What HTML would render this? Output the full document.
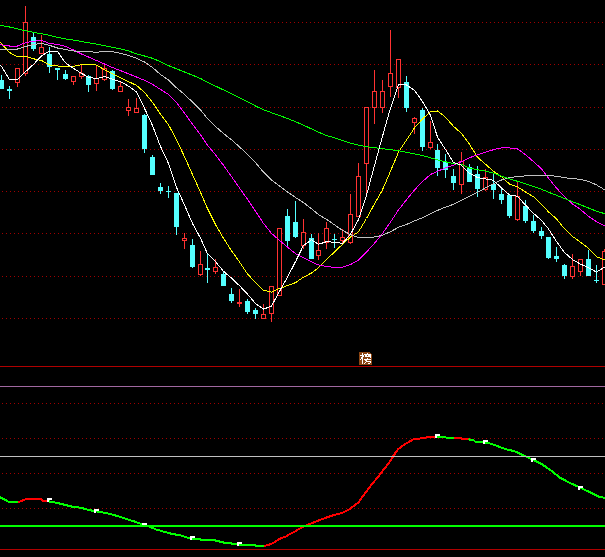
<!DOCTYPE html>
<html><head><meta charset="utf-8"><style>
html,body{margin:0;padding:0;background:#000;width:605px;height:557px;overflow:hidden;font-family:"Liberation Sans",sans-serif;}
svg{display:block}
</style></head><body><svg width="605" height="557" viewBox="0 0 605 557" shape-rendering="crispEdges"><path fill="#a00000" d="M2 22h1v1h-1zM6 22h1v1h-1zM10 22h1v1h-1zM14 22h1v1h-1zM18 22h1v1h-1zM22 22h1v1h-1zM26 22h1v1h-1zM30 22h1v1h-1zM34 22h1v1h-1zM38 22h1v1h-1zM42 22h1v1h-1zM46 22h1v1h-1zM50 22h1v1h-1zM54 22h1v1h-1zM58 22h1v1h-1zM62 22h1v1h-1zM66 22h1v1h-1zM70 22h1v1h-1zM74 22h1v1h-1zM78 22h1v1h-1zM82 22h1v1h-1zM86 22h1v1h-1zM90 22h1v1h-1zM94 22h1v1h-1zM98 22h1v1h-1zM102 22h1v1h-1zM106 22h1v1h-1zM110 22h1v1h-1zM114 22h1v1h-1zM118 22h1v1h-1zM122 22h1v1h-1zM126 22h1v1h-1zM130 22h1v1h-1zM134 22h1v1h-1zM138 22h1v1h-1zM142 22h1v1h-1zM146 22h1v1h-1zM150 22h1v1h-1zM154 22h1v1h-1zM158 22h1v1h-1zM162 22h1v1h-1zM166 22h1v1h-1zM170 22h1v1h-1zM174 22h1v1h-1zM178 22h1v1h-1zM182 22h1v1h-1zM186 22h1v1h-1zM190 22h1v1h-1zM194 22h1v1h-1zM198 22h1v1h-1zM202 22h1v1h-1zM206 22h1v1h-1zM210 22h1v1h-1zM214 22h1v1h-1zM218 22h1v1h-1zM222 22h1v1h-1zM226 22h1v1h-1zM230 22h1v1h-1zM234 22h1v1h-1zM238 22h1v1h-1zM242 22h1v1h-1zM246 22h1v1h-1zM250 22h1v1h-1zM254 22h1v1h-1zM258 22h1v1h-1zM262 22h1v1h-1zM266 22h1v1h-1zM270 22h1v1h-1zM274 22h1v1h-1zM278 22h1v1h-1zM282 22h1v1h-1zM286 22h1v1h-1zM290 22h1v1h-1zM294 22h1v1h-1zM298 22h1v1h-1zM302 22h1v1h-1zM306 22h1v1h-1zM310 22h1v1h-1zM314 22h1v1h-1zM318 22h1v1h-1zM322 22h1v1h-1zM326 22h1v1h-1zM330 22h1v1h-1zM334 22h1v1h-1zM338 22h1v1h-1zM342 22h1v1h-1zM346 22h1v1h-1zM350 22h1v1h-1zM354 22h1v1h-1zM358 22h1v1h-1zM362 22h1v1h-1zM366 22h1v1h-1zM370 22h1v1h-1zM374 22h1v1h-1zM378 22h1v1h-1zM382 22h1v1h-1zM386 22h1v1h-1zM390 22h1v1h-1zM394 22h1v1h-1zM398 22h1v1h-1zM402 22h1v1h-1zM406 22h1v1h-1zM410 22h1v1h-1zM414 22h1v1h-1zM418 22h1v1h-1zM422 22h1v1h-1zM426 22h1v1h-1zM430 22h1v1h-1zM434 22h1v1h-1zM438 22h1v1h-1zM442 22h1v1h-1zM446 22h1v1h-1zM450 22h1v1h-1zM454 22h1v1h-1zM458 22h1v1h-1zM462 22h1v1h-1zM466 22h1v1h-1zM470 22h1v1h-1zM474 22h1v1h-1zM478 22h1v1h-1zM482 22h1v1h-1zM486 22h1v1h-1zM490 22h1v1h-1zM494 22h1v1h-1zM498 22h1v1h-1zM502 22h1v1h-1zM506 22h1v1h-1zM510 22h1v1h-1zM514 22h1v1h-1zM518 22h1v1h-1zM522 22h1v1h-1zM526 22h1v1h-1zM530 22h1v1h-1zM534 22h1v1h-1zM538 22h1v1h-1zM542 22h1v1h-1zM546 22h1v1h-1zM550 22h1v1h-1zM554 22h1v1h-1zM558 22h1v1h-1zM562 22h1v1h-1zM566 22h1v1h-1zM570 22h1v1h-1zM574 22h1v1h-1zM578 22h1v1h-1zM582 22h1v1h-1zM586 22h1v1h-1zM590 22h1v1h-1zM594 22h1v1h-1zM598 22h1v1h-1zM602 22h1v1h-1zM2 64h1v1h-1zM6 64h1v1h-1zM10 64h1v1h-1zM14 64h1v1h-1zM18 64h1v1h-1zM22 64h1v1h-1zM26 64h1v1h-1zM30 64h1v1h-1zM34 64h1v1h-1zM38 64h1v1h-1zM42 64h1v1h-1zM46 64h1v1h-1zM50 64h1v1h-1zM54 64h1v1h-1zM58 64h1v1h-1zM62 64h1v1h-1zM66 64h1v1h-1zM70 64h1v1h-1zM74 64h1v1h-1zM78 64h1v1h-1zM82 64h1v1h-1zM86 64h1v1h-1zM90 64h1v1h-1zM94 64h1v1h-1zM98 64h1v1h-1zM102 64h1v1h-1zM106 64h1v1h-1zM110 64h1v1h-1zM114 64h1v1h-1zM118 64h1v1h-1zM122 64h1v1h-1zM126 64h1v1h-1zM130 64h1v1h-1zM134 64h1v1h-1zM138 64h1v1h-1zM142 64h1v1h-1zM146 64h1v1h-1zM150 64h1v1h-1zM154 64h1v1h-1zM158 64h1v1h-1zM162 64h1v1h-1zM166 64h1v1h-1zM170 64h1v1h-1zM174 64h1v1h-1zM178 64h1v1h-1zM182 64h1v1h-1zM186 64h1v1h-1zM190 64h1v1h-1zM194 64h1v1h-1zM198 64h1v1h-1zM202 64h1v1h-1zM206 64h1v1h-1zM210 64h1v1h-1zM214 64h1v1h-1zM218 64h1v1h-1zM222 64h1v1h-1zM226 64h1v1h-1zM230 64h1v1h-1zM234 64h1v1h-1zM238 64h1v1h-1zM242 64h1v1h-1zM246 64h1v1h-1zM250 64h1v1h-1zM254 64h1v1h-1zM258 64h1v1h-1zM262 64h1v1h-1zM266 64h1v1h-1zM270 64h1v1h-1zM274 64h1v1h-1zM278 64h1v1h-1zM282 64h1v1h-1zM286 64h1v1h-1zM290 64h1v1h-1zM294 64h1v1h-1zM298 64h1v1h-1zM302 64h1v1h-1zM306 64h1v1h-1zM310 64h1v1h-1zM314 64h1v1h-1zM318 64h1v1h-1zM322 64h1v1h-1zM326 64h1v1h-1zM330 64h1v1h-1zM334 64h1v1h-1zM338 64h1v1h-1zM342 64h1v1h-1zM346 64h1v1h-1zM350 64h1v1h-1zM354 64h1v1h-1zM358 64h1v1h-1zM362 64h1v1h-1zM366 64h1v1h-1zM370 64h1v1h-1zM374 64h1v1h-1zM378 64h1v1h-1zM382 64h1v1h-1zM386 64h1v1h-1zM390 64h1v1h-1zM394 64h1v1h-1zM398 64h1v1h-1zM402 64h1v1h-1zM406 64h1v1h-1zM410 64h1v1h-1zM414 64h1v1h-1zM418 64h1v1h-1zM422 64h1v1h-1zM426 64h1v1h-1zM430 64h1v1h-1zM434 64h1v1h-1zM438 64h1v1h-1zM442 64h1v1h-1zM446 64h1v1h-1zM450 64h1v1h-1zM454 64h1v1h-1zM458 64h1v1h-1zM462 64h1v1h-1zM466 64h1v1h-1zM470 64h1v1h-1zM474 64h1v1h-1zM478 64h1v1h-1zM482 64h1v1h-1zM486 64h1v1h-1zM490 64h1v1h-1zM494 64h1v1h-1zM498 64h1v1h-1zM502 64h1v1h-1zM506 64h1v1h-1zM510 64h1v1h-1zM514 64h1v1h-1zM518 64h1v1h-1zM522 64h1v1h-1zM526 64h1v1h-1zM530 64h1v1h-1zM534 64h1v1h-1zM538 64h1v1h-1zM542 64h1v1h-1zM546 64h1v1h-1zM550 64h1v1h-1zM554 64h1v1h-1zM558 64h1v1h-1zM562 64h1v1h-1zM566 64h1v1h-1zM570 64h1v1h-1zM574 64h1v1h-1zM578 64h1v1h-1zM582 64h1v1h-1zM586 64h1v1h-1zM590 64h1v1h-1zM594 64h1v1h-1zM598 64h1v1h-1zM602 64h1v1h-1zM2 107h1v1h-1zM6 107h1v1h-1zM10 107h1v1h-1zM14 107h1v1h-1zM18 107h1v1h-1zM22 107h1v1h-1zM26 107h1v1h-1zM30 107h1v1h-1zM34 107h1v1h-1zM38 107h1v1h-1zM42 107h1v1h-1zM46 107h1v1h-1zM50 107h1v1h-1zM54 107h1v1h-1zM58 107h1v1h-1zM62 107h1v1h-1zM66 107h1v1h-1zM70 107h1v1h-1zM74 107h1v1h-1zM78 107h1v1h-1zM82 107h1v1h-1zM86 107h1v1h-1zM90 107h1v1h-1zM94 107h1v1h-1zM98 107h1v1h-1zM102 107h1v1h-1zM106 107h1v1h-1zM110 107h1v1h-1zM114 107h1v1h-1zM118 107h1v1h-1zM122 107h1v1h-1zM126 107h1v1h-1zM130 107h1v1h-1zM134 107h1v1h-1zM138 107h1v1h-1zM142 107h1v1h-1zM146 107h1v1h-1zM150 107h1v1h-1zM154 107h1v1h-1zM158 107h1v1h-1zM162 107h1v1h-1zM166 107h1v1h-1zM170 107h1v1h-1zM174 107h1v1h-1zM178 107h1v1h-1zM182 107h1v1h-1zM186 107h1v1h-1zM190 107h1v1h-1zM194 107h1v1h-1zM198 107h1v1h-1zM202 107h1v1h-1zM206 107h1v1h-1zM210 107h1v1h-1zM214 107h1v1h-1zM218 107h1v1h-1zM222 107h1v1h-1zM226 107h1v1h-1zM230 107h1v1h-1zM234 107h1v1h-1zM238 107h1v1h-1zM242 107h1v1h-1zM246 107h1v1h-1zM250 107h1v1h-1zM254 107h1v1h-1zM258 107h1v1h-1zM262 107h1v1h-1zM266 107h1v1h-1zM270 107h1v1h-1zM274 107h1v1h-1zM278 107h1v1h-1zM282 107h1v1h-1zM286 107h1v1h-1zM290 107h1v1h-1zM294 107h1v1h-1zM298 107h1v1h-1zM302 107h1v1h-1zM306 107h1v1h-1zM310 107h1v1h-1zM314 107h1v1h-1zM318 107h1v1h-1zM322 107h1v1h-1zM326 107h1v1h-1zM330 107h1v1h-1zM334 107h1v1h-1zM338 107h1v1h-1zM342 107h1v1h-1zM346 107h1v1h-1zM350 107h1v1h-1zM354 107h1v1h-1zM358 107h1v1h-1zM362 107h1v1h-1zM366 107h1v1h-1zM370 107h1v1h-1zM374 107h1v1h-1zM378 107h1v1h-1zM382 107h1v1h-1zM386 107h1v1h-1zM390 107h1v1h-1zM394 107h1v1h-1zM398 107h1v1h-1zM402 107h1v1h-1zM406 107h1v1h-1zM410 107h1v1h-1zM414 107h1v1h-1zM418 107h1v1h-1zM422 107h1v1h-1zM426 107h1v1h-1zM430 107h1v1h-1zM434 107h1v1h-1zM438 107h1v1h-1zM442 107h1v1h-1zM446 107h1v1h-1zM450 107h1v1h-1zM454 107h1v1h-1zM458 107h1v1h-1zM462 107h1v1h-1zM466 107h1v1h-1zM470 107h1v1h-1zM474 107h1v1h-1zM478 107h1v1h-1zM482 107h1v1h-1zM486 107h1v1h-1zM490 107h1v1h-1zM494 107h1v1h-1zM498 107h1v1h-1zM502 107h1v1h-1zM506 107h1v1h-1zM510 107h1v1h-1zM514 107h1v1h-1zM518 107h1v1h-1zM522 107h1v1h-1zM526 107h1v1h-1zM530 107h1v1h-1zM534 107h1v1h-1zM538 107h1v1h-1zM542 107h1v1h-1zM546 107h1v1h-1zM550 107h1v1h-1zM554 107h1v1h-1zM558 107h1v1h-1zM562 107h1v1h-1zM566 107h1v1h-1zM570 107h1v1h-1zM574 107h1v1h-1zM578 107h1v1h-1zM582 107h1v1h-1zM586 107h1v1h-1zM590 107h1v1h-1zM594 107h1v1h-1zM598 107h1v1h-1zM602 107h1v1h-1zM2 149h1v1h-1zM6 149h1v1h-1zM10 149h1v1h-1zM14 149h1v1h-1zM18 149h1v1h-1zM22 149h1v1h-1zM26 149h1v1h-1zM30 149h1v1h-1zM34 149h1v1h-1zM38 149h1v1h-1zM42 149h1v1h-1zM46 149h1v1h-1zM50 149h1v1h-1zM54 149h1v1h-1zM58 149h1v1h-1zM62 149h1v1h-1zM66 149h1v1h-1zM70 149h1v1h-1zM74 149h1v1h-1zM78 149h1v1h-1zM82 149h1v1h-1zM86 149h1v1h-1zM90 149h1v1h-1zM94 149h1v1h-1zM98 149h1v1h-1zM102 149h1v1h-1zM106 149h1v1h-1zM110 149h1v1h-1zM114 149h1v1h-1zM118 149h1v1h-1zM122 149h1v1h-1zM126 149h1v1h-1zM130 149h1v1h-1zM134 149h1v1h-1zM138 149h1v1h-1zM142 149h1v1h-1zM146 149h1v1h-1zM150 149h1v1h-1zM154 149h1v1h-1zM158 149h1v1h-1zM162 149h1v1h-1zM166 149h1v1h-1zM170 149h1v1h-1zM174 149h1v1h-1zM178 149h1v1h-1zM182 149h1v1h-1zM186 149h1v1h-1zM190 149h1v1h-1zM194 149h1v1h-1zM198 149h1v1h-1zM202 149h1v1h-1zM206 149h1v1h-1zM210 149h1v1h-1zM214 149h1v1h-1zM218 149h1v1h-1zM222 149h1v1h-1zM226 149h1v1h-1zM230 149h1v1h-1zM234 149h1v1h-1zM238 149h1v1h-1zM242 149h1v1h-1zM246 149h1v1h-1zM250 149h1v1h-1zM254 149h1v1h-1zM258 149h1v1h-1zM262 149h1v1h-1zM266 149h1v1h-1zM270 149h1v1h-1zM274 149h1v1h-1zM278 149h1v1h-1zM282 149h1v1h-1zM286 149h1v1h-1zM290 149h1v1h-1zM294 149h1v1h-1zM298 149h1v1h-1zM302 149h1v1h-1zM306 149h1v1h-1zM310 149h1v1h-1zM314 149h1v1h-1zM318 149h1v1h-1zM322 149h1v1h-1zM326 149h1v1h-1zM330 149h1v1h-1zM334 149h1v1h-1zM338 149h1v1h-1zM342 149h1v1h-1zM346 149h1v1h-1zM350 149h1v1h-1zM354 149h1v1h-1zM358 149h1v1h-1zM362 149h1v1h-1zM366 149h1v1h-1zM370 149h1v1h-1zM374 149h1v1h-1zM378 149h1v1h-1zM382 149h1v1h-1zM386 149h1v1h-1zM390 149h1v1h-1zM394 149h1v1h-1zM398 149h1v1h-1zM402 149h1v1h-1zM406 149h1v1h-1zM410 149h1v1h-1zM414 149h1v1h-1zM418 149h1v1h-1zM422 149h1v1h-1zM426 149h1v1h-1zM430 149h1v1h-1zM434 149h1v1h-1zM438 149h1v1h-1zM442 149h1v1h-1zM446 149h1v1h-1zM450 149h1v1h-1zM454 149h1v1h-1zM458 149h1v1h-1zM462 149h1v1h-1zM466 149h1v1h-1zM470 149h1v1h-1zM474 149h1v1h-1zM478 149h1v1h-1zM482 149h1v1h-1zM486 149h1v1h-1zM490 149h1v1h-1zM494 149h1v1h-1zM498 149h1v1h-1zM502 149h1v1h-1zM506 149h1v1h-1zM510 149h1v1h-1zM514 149h1v1h-1zM518 149h1v1h-1zM522 149h1v1h-1zM526 149h1v1h-1zM530 149h1v1h-1zM534 149h1v1h-1zM538 149h1v1h-1zM542 149h1v1h-1zM546 149h1v1h-1zM550 149h1v1h-1zM554 149h1v1h-1zM558 149h1v1h-1zM562 149h1v1h-1zM566 149h1v1h-1zM570 149h1v1h-1zM574 149h1v1h-1zM578 149h1v1h-1zM582 149h1v1h-1zM586 149h1v1h-1zM590 149h1v1h-1zM594 149h1v1h-1zM598 149h1v1h-1zM602 149h1v1h-1zM2 191h1v1h-1zM6 191h1v1h-1zM10 191h1v1h-1zM14 191h1v1h-1zM18 191h1v1h-1zM22 191h1v1h-1zM26 191h1v1h-1zM30 191h1v1h-1zM34 191h1v1h-1zM38 191h1v1h-1zM42 191h1v1h-1zM46 191h1v1h-1zM50 191h1v1h-1zM54 191h1v1h-1zM58 191h1v1h-1zM62 191h1v1h-1zM66 191h1v1h-1zM70 191h1v1h-1zM74 191h1v1h-1zM78 191h1v1h-1zM82 191h1v1h-1zM86 191h1v1h-1zM90 191h1v1h-1zM94 191h1v1h-1zM98 191h1v1h-1zM102 191h1v1h-1zM106 191h1v1h-1zM110 191h1v1h-1zM114 191h1v1h-1zM118 191h1v1h-1zM122 191h1v1h-1zM126 191h1v1h-1zM130 191h1v1h-1zM134 191h1v1h-1zM138 191h1v1h-1zM142 191h1v1h-1zM146 191h1v1h-1zM150 191h1v1h-1zM154 191h1v1h-1zM158 191h1v1h-1zM162 191h1v1h-1zM166 191h1v1h-1zM170 191h1v1h-1zM174 191h1v1h-1zM178 191h1v1h-1zM182 191h1v1h-1zM186 191h1v1h-1zM190 191h1v1h-1zM194 191h1v1h-1zM198 191h1v1h-1zM202 191h1v1h-1zM206 191h1v1h-1zM210 191h1v1h-1zM214 191h1v1h-1zM218 191h1v1h-1zM222 191h1v1h-1zM226 191h1v1h-1zM230 191h1v1h-1zM234 191h1v1h-1zM238 191h1v1h-1zM242 191h1v1h-1zM246 191h1v1h-1zM250 191h1v1h-1zM254 191h1v1h-1zM258 191h1v1h-1zM262 191h1v1h-1zM266 191h1v1h-1zM270 191h1v1h-1zM274 191h1v1h-1zM278 191h1v1h-1zM282 191h1v1h-1zM286 191h1v1h-1zM290 191h1v1h-1zM294 191h1v1h-1zM298 191h1v1h-1zM302 191h1v1h-1zM306 191h1v1h-1zM310 191h1v1h-1zM314 191h1v1h-1zM318 191h1v1h-1zM322 191h1v1h-1zM326 191h1v1h-1zM330 191h1v1h-1zM334 191h1v1h-1zM338 191h1v1h-1zM342 191h1v1h-1zM346 191h1v1h-1zM350 191h1v1h-1zM354 191h1v1h-1zM358 191h1v1h-1zM362 191h1v1h-1zM366 191h1v1h-1zM370 191h1v1h-1zM374 191h1v1h-1zM378 191h1v1h-1zM382 191h1v1h-1zM386 191h1v1h-1zM390 191h1v1h-1zM394 191h1v1h-1zM398 191h1v1h-1zM402 191h1v1h-1zM406 191h1v1h-1zM410 191h1v1h-1zM414 191h1v1h-1zM418 191h1v1h-1zM422 191h1v1h-1zM426 191h1v1h-1zM430 191h1v1h-1zM434 191h1v1h-1zM438 191h1v1h-1zM442 191h1v1h-1zM446 191h1v1h-1zM450 191h1v1h-1zM454 191h1v1h-1zM458 191h1v1h-1zM462 191h1v1h-1zM466 191h1v1h-1zM470 191h1v1h-1zM474 191h1v1h-1zM478 191h1v1h-1zM482 191h1v1h-1zM486 191h1v1h-1zM490 191h1v1h-1zM494 191h1v1h-1zM498 191h1v1h-1zM502 191h1v1h-1zM506 191h1v1h-1zM510 191h1v1h-1zM514 191h1v1h-1zM518 191h1v1h-1zM522 191h1v1h-1zM526 191h1v1h-1zM530 191h1v1h-1zM534 191h1v1h-1zM538 191h1v1h-1zM542 191h1v1h-1zM546 191h1v1h-1zM550 191h1v1h-1zM554 191h1v1h-1zM558 191h1v1h-1zM562 191h1v1h-1zM566 191h1v1h-1zM570 191h1v1h-1zM574 191h1v1h-1zM578 191h1v1h-1zM582 191h1v1h-1zM586 191h1v1h-1zM590 191h1v1h-1zM594 191h1v1h-1zM598 191h1v1h-1zM602 191h1v1h-1zM2 233h1v1h-1zM6 233h1v1h-1zM10 233h1v1h-1zM14 233h1v1h-1zM18 233h1v1h-1zM22 233h1v1h-1zM26 233h1v1h-1zM30 233h1v1h-1zM34 233h1v1h-1zM38 233h1v1h-1zM42 233h1v1h-1zM46 233h1v1h-1zM50 233h1v1h-1zM54 233h1v1h-1zM58 233h1v1h-1zM62 233h1v1h-1zM66 233h1v1h-1zM70 233h1v1h-1zM74 233h1v1h-1zM78 233h1v1h-1zM82 233h1v1h-1zM86 233h1v1h-1zM90 233h1v1h-1zM94 233h1v1h-1zM98 233h1v1h-1zM102 233h1v1h-1zM106 233h1v1h-1zM110 233h1v1h-1zM114 233h1v1h-1zM118 233h1v1h-1zM122 233h1v1h-1zM126 233h1v1h-1zM130 233h1v1h-1zM134 233h1v1h-1zM138 233h1v1h-1zM142 233h1v1h-1zM146 233h1v1h-1zM150 233h1v1h-1zM154 233h1v1h-1zM158 233h1v1h-1zM162 233h1v1h-1zM166 233h1v1h-1zM170 233h1v1h-1zM174 233h1v1h-1zM178 233h1v1h-1zM182 233h1v1h-1zM186 233h1v1h-1zM190 233h1v1h-1zM194 233h1v1h-1zM198 233h1v1h-1zM202 233h1v1h-1zM206 233h1v1h-1zM210 233h1v1h-1zM214 233h1v1h-1zM218 233h1v1h-1zM222 233h1v1h-1zM226 233h1v1h-1zM230 233h1v1h-1zM234 233h1v1h-1zM238 233h1v1h-1zM242 233h1v1h-1zM246 233h1v1h-1zM250 233h1v1h-1zM254 233h1v1h-1zM258 233h1v1h-1zM262 233h1v1h-1zM266 233h1v1h-1zM270 233h1v1h-1zM274 233h1v1h-1zM278 233h1v1h-1zM282 233h1v1h-1zM286 233h1v1h-1zM290 233h1v1h-1zM294 233h1v1h-1zM298 233h1v1h-1zM302 233h1v1h-1zM306 233h1v1h-1zM310 233h1v1h-1zM314 233h1v1h-1zM318 233h1v1h-1zM322 233h1v1h-1zM326 233h1v1h-1zM330 233h1v1h-1zM334 233h1v1h-1zM338 233h1v1h-1zM342 233h1v1h-1zM346 233h1v1h-1zM350 233h1v1h-1zM354 233h1v1h-1zM358 233h1v1h-1zM362 233h1v1h-1zM366 233h1v1h-1zM370 233h1v1h-1zM374 233h1v1h-1zM378 233h1v1h-1zM382 233h1v1h-1zM386 233h1v1h-1zM390 233h1v1h-1zM394 233h1v1h-1zM398 233h1v1h-1zM402 233h1v1h-1zM406 233h1v1h-1zM410 233h1v1h-1zM414 233h1v1h-1zM418 233h1v1h-1zM422 233h1v1h-1zM426 233h1v1h-1zM430 233h1v1h-1zM434 233h1v1h-1zM438 233h1v1h-1zM442 233h1v1h-1zM446 233h1v1h-1zM450 233h1v1h-1zM454 233h1v1h-1zM458 233h1v1h-1zM462 233h1v1h-1zM466 233h1v1h-1zM470 233h1v1h-1zM474 233h1v1h-1zM478 233h1v1h-1zM482 233h1v1h-1zM486 233h1v1h-1zM490 233h1v1h-1zM494 233h1v1h-1zM498 233h1v1h-1zM502 233h1v1h-1zM506 233h1v1h-1zM510 233h1v1h-1zM514 233h1v1h-1zM518 233h1v1h-1zM522 233h1v1h-1zM526 233h1v1h-1zM530 233h1v1h-1zM534 233h1v1h-1zM538 233h1v1h-1zM542 233h1v1h-1zM546 233h1v1h-1zM550 233h1v1h-1zM554 233h1v1h-1zM558 233h1v1h-1zM562 233h1v1h-1zM566 233h1v1h-1zM570 233h1v1h-1zM574 233h1v1h-1zM578 233h1v1h-1zM582 233h1v1h-1zM586 233h1v1h-1zM590 233h1v1h-1zM594 233h1v1h-1zM598 233h1v1h-1zM602 233h1v1h-1zM2 276h1v1h-1zM6 276h1v1h-1zM10 276h1v1h-1zM14 276h1v1h-1zM18 276h1v1h-1zM22 276h1v1h-1zM26 276h1v1h-1zM30 276h1v1h-1zM34 276h1v1h-1zM38 276h1v1h-1zM42 276h1v1h-1zM46 276h1v1h-1zM50 276h1v1h-1zM54 276h1v1h-1zM58 276h1v1h-1zM62 276h1v1h-1zM66 276h1v1h-1zM70 276h1v1h-1zM74 276h1v1h-1zM78 276h1v1h-1zM82 276h1v1h-1zM86 276h1v1h-1zM90 276h1v1h-1zM94 276h1v1h-1zM98 276h1v1h-1zM102 276h1v1h-1zM106 276h1v1h-1zM110 276h1v1h-1zM114 276h1v1h-1zM118 276h1v1h-1zM122 276h1v1h-1zM126 276h1v1h-1zM130 276h1v1h-1zM134 276h1v1h-1zM138 276h1v1h-1zM142 276h1v1h-1zM146 276h1v1h-1zM150 276h1v1h-1zM154 276h1v1h-1zM158 276h1v1h-1zM162 276h1v1h-1zM166 276h1v1h-1zM170 276h1v1h-1zM174 276h1v1h-1zM178 276h1v1h-1zM182 276h1v1h-1zM186 276h1v1h-1zM190 276h1v1h-1zM194 276h1v1h-1zM198 276h1v1h-1zM202 276h1v1h-1zM206 276h1v1h-1zM210 276h1v1h-1zM214 276h1v1h-1zM218 276h1v1h-1zM222 276h1v1h-1zM226 276h1v1h-1zM230 276h1v1h-1zM234 276h1v1h-1zM238 276h1v1h-1zM242 276h1v1h-1zM246 276h1v1h-1zM250 276h1v1h-1zM254 276h1v1h-1zM258 276h1v1h-1zM262 276h1v1h-1zM266 276h1v1h-1zM270 276h1v1h-1zM274 276h1v1h-1zM278 276h1v1h-1zM282 276h1v1h-1zM286 276h1v1h-1zM290 276h1v1h-1zM294 276h1v1h-1zM298 276h1v1h-1zM302 276h1v1h-1zM306 276h1v1h-1zM310 276h1v1h-1zM314 276h1v1h-1zM318 276h1v1h-1zM322 276h1v1h-1zM326 276h1v1h-1zM330 276h1v1h-1zM334 276h1v1h-1zM338 276h1v1h-1zM342 276h1v1h-1zM346 276h1v1h-1zM350 276h1v1h-1zM354 276h1v1h-1zM358 276h1v1h-1zM362 276h1v1h-1zM366 276h1v1h-1zM370 276h1v1h-1zM374 276h1v1h-1zM378 276h1v1h-1zM382 276h1v1h-1zM386 276h1v1h-1zM390 276h1v1h-1zM394 276h1v1h-1zM398 276h1v1h-1zM402 276h1v1h-1zM406 276h1v1h-1zM410 276h1v1h-1zM414 276h1v1h-1zM418 276h1v1h-1zM422 276h1v1h-1zM426 276h1v1h-1zM430 276h1v1h-1zM434 276h1v1h-1zM438 276h1v1h-1zM442 276h1v1h-1zM446 276h1v1h-1zM450 276h1v1h-1zM454 276h1v1h-1zM458 276h1v1h-1zM462 276h1v1h-1zM466 276h1v1h-1zM470 276h1v1h-1zM474 276h1v1h-1zM478 276h1v1h-1zM482 276h1v1h-1zM486 276h1v1h-1zM490 276h1v1h-1zM494 276h1v1h-1zM498 276h1v1h-1zM502 276h1v1h-1zM506 276h1v1h-1zM510 276h1v1h-1zM514 276h1v1h-1zM518 276h1v1h-1zM522 276h1v1h-1zM526 276h1v1h-1zM530 276h1v1h-1zM534 276h1v1h-1zM538 276h1v1h-1zM542 276h1v1h-1zM546 276h1v1h-1zM550 276h1v1h-1zM554 276h1v1h-1zM558 276h1v1h-1zM562 276h1v1h-1zM566 276h1v1h-1zM570 276h1v1h-1zM574 276h1v1h-1zM578 276h1v1h-1zM582 276h1v1h-1zM586 276h1v1h-1zM590 276h1v1h-1zM594 276h1v1h-1zM598 276h1v1h-1zM602 276h1v1h-1zM2 318h1v1h-1zM6 318h1v1h-1zM10 318h1v1h-1zM14 318h1v1h-1zM18 318h1v1h-1zM22 318h1v1h-1zM26 318h1v1h-1zM30 318h1v1h-1zM34 318h1v1h-1zM38 318h1v1h-1zM42 318h1v1h-1zM46 318h1v1h-1zM50 318h1v1h-1zM54 318h1v1h-1zM58 318h1v1h-1zM62 318h1v1h-1zM66 318h1v1h-1zM70 318h1v1h-1zM74 318h1v1h-1zM78 318h1v1h-1zM82 318h1v1h-1zM86 318h1v1h-1zM90 318h1v1h-1zM94 318h1v1h-1zM98 318h1v1h-1zM102 318h1v1h-1zM106 318h1v1h-1zM110 318h1v1h-1zM114 318h1v1h-1zM118 318h1v1h-1zM122 318h1v1h-1zM126 318h1v1h-1zM130 318h1v1h-1zM134 318h1v1h-1zM138 318h1v1h-1zM142 318h1v1h-1zM146 318h1v1h-1zM150 318h1v1h-1zM154 318h1v1h-1zM158 318h1v1h-1zM162 318h1v1h-1zM166 318h1v1h-1zM170 318h1v1h-1zM174 318h1v1h-1zM178 318h1v1h-1zM182 318h1v1h-1zM186 318h1v1h-1zM190 318h1v1h-1zM194 318h1v1h-1zM198 318h1v1h-1zM202 318h1v1h-1zM206 318h1v1h-1zM210 318h1v1h-1zM214 318h1v1h-1zM218 318h1v1h-1zM222 318h1v1h-1zM226 318h1v1h-1zM230 318h1v1h-1zM234 318h1v1h-1zM238 318h1v1h-1zM242 318h1v1h-1zM246 318h1v1h-1zM250 318h1v1h-1zM254 318h1v1h-1zM258 318h1v1h-1zM262 318h1v1h-1zM266 318h1v1h-1zM270 318h1v1h-1zM274 318h1v1h-1zM278 318h1v1h-1zM282 318h1v1h-1zM286 318h1v1h-1zM290 318h1v1h-1zM294 318h1v1h-1zM298 318h1v1h-1zM302 318h1v1h-1zM306 318h1v1h-1zM310 318h1v1h-1zM314 318h1v1h-1zM318 318h1v1h-1zM322 318h1v1h-1zM326 318h1v1h-1zM330 318h1v1h-1zM334 318h1v1h-1zM338 318h1v1h-1zM342 318h1v1h-1zM346 318h1v1h-1zM350 318h1v1h-1zM354 318h1v1h-1zM358 318h1v1h-1zM362 318h1v1h-1zM366 318h1v1h-1zM370 318h1v1h-1zM374 318h1v1h-1zM378 318h1v1h-1zM382 318h1v1h-1zM386 318h1v1h-1zM390 318h1v1h-1zM394 318h1v1h-1zM398 318h1v1h-1zM402 318h1v1h-1zM406 318h1v1h-1zM410 318h1v1h-1zM414 318h1v1h-1zM418 318h1v1h-1zM422 318h1v1h-1zM426 318h1v1h-1zM430 318h1v1h-1zM434 318h1v1h-1zM438 318h1v1h-1zM442 318h1v1h-1zM446 318h1v1h-1zM450 318h1v1h-1zM454 318h1v1h-1zM458 318h1v1h-1zM462 318h1v1h-1zM466 318h1v1h-1zM470 318h1v1h-1zM474 318h1v1h-1zM478 318h1v1h-1zM482 318h1v1h-1zM486 318h1v1h-1zM490 318h1v1h-1zM494 318h1v1h-1zM498 318h1v1h-1zM502 318h1v1h-1zM506 318h1v1h-1zM510 318h1v1h-1zM514 318h1v1h-1zM518 318h1v1h-1zM522 318h1v1h-1zM526 318h1v1h-1zM530 318h1v1h-1zM534 318h1v1h-1zM538 318h1v1h-1zM542 318h1v1h-1zM546 318h1v1h-1zM550 318h1v1h-1zM554 318h1v1h-1zM558 318h1v1h-1zM562 318h1v1h-1zM566 318h1v1h-1zM570 318h1v1h-1zM574 318h1v1h-1zM578 318h1v1h-1zM582 318h1v1h-1zM586 318h1v1h-1zM590 318h1v1h-1zM594 318h1v1h-1zM598 318h1v1h-1zM602 318h1v1h-1zM2 403h1v1h-1zM6 403h1v1h-1zM10 403h1v1h-1zM14 403h1v1h-1zM18 403h1v1h-1zM22 403h1v1h-1zM26 403h1v1h-1zM30 403h1v1h-1zM34 403h1v1h-1zM38 403h1v1h-1zM42 403h1v1h-1zM46 403h1v1h-1zM50 403h1v1h-1zM54 403h1v1h-1zM58 403h1v1h-1zM62 403h1v1h-1zM66 403h1v1h-1zM70 403h1v1h-1zM74 403h1v1h-1zM78 403h1v1h-1zM82 403h1v1h-1zM86 403h1v1h-1zM90 403h1v1h-1zM94 403h1v1h-1zM98 403h1v1h-1zM102 403h1v1h-1zM106 403h1v1h-1zM110 403h1v1h-1zM114 403h1v1h-1zM118 403h1v1h-1zM122 403h1v1h-1zM126 403h1v1h-1zM130 403h1v1h-1zM134 403h1v1h-1zM138 403h1v1h-1zM142 403h1v1h-1zM146 403h1v1h-1zM150 403h1v1h-1zM154 403h1v1h-1zM158 403h1v1h-1zM162 403h1v1h-1zM166 403h1v1h-1zM170 403h1v1h-1zM174 403h1v1h-1zM178 403h1v1h-1zM182 403h1v1h-1zM186 403h1v1h-1zM190 403h1v1h-1zM194 403h1v1h-1zM198 403h1v1h-1zM202 403h1v1h-1zM206 403h1v1h-1zM210 403h1v1h-1zM214 403h1v1h-1zM218 403h1v1h-1zM222 403h1v1h-1zM226 403h1v1h-1zM230 403h1v1h-1zM234 403h1v1h-1zM238 403h1v1h-1zM242 403h1v1h-1zM246 403h1v1h-1zM250 403h1v1h-1zM254 403h1v1h-1zM258 403h1v1h-1zM262 403h1v1h-1zM266 403h1v1h-1zM270 403h1v1h-1zM274 403h1v1h-1zM278 403h1v1h-1zM282 403h1v1h-1zM286 403h1v1h-1zM290 403h1v1h-1zM294 403h1v1h-1zM298 403h1v1h-1zM302 403h1v1h-1zM306 403h1v1h-1zM310 403h1v1h-1zM314 403h1v1h-1zM318 403h1v1h-1zM322 403h1v1h-1zM326 403h1v1h-1zM330 403h1v1h-1zM334 403h1v1h-1zM338 403h1v1h-1zM342 403h1v1h-1zM346 403h1v1h-1zM350 403h1v1h-1zM354 403h1v1h-1zM358 403h1v1h-1zM362 403h1v1h-1zM366 403h1v1h-1zM370 403h1v1h-1zM374 403h1v1h-1zM378 403h1v1h-1zM382 403h1v1h-1zM386 403h1v1h-1zM390 403h1v1h-1zM394 403h1v1h-1zM398 403h1v1h-1zM402 403h1v1h-1zM406 403h1v1h-1zM410 403h1v1h-1zM414 403h1v1h-1zM418 403h1v1h-1zM422 403h1v1h-1zM426 403h1v1h-1zM430 403h1v1h-1zM434 403h1v1h-1zM438 403h1v1h-1zM442 403h1v1h-1zM446 403h1v1h-1zM450 403h1v1h-1zM454 403h1v1h-1zM458 403h1v1h-1zM462 403h1v1h-1zM466 403h1v1h-1zM470 403h1v1h-1zM474 403h1v1h-1zM478 403h1v1h-1zM482 403h1v1h-1zM486 403h1v1h-1zM490 403h1v1h-1zM494 403h1v1h-1zM498 403h1v1h-1zM502 403h1v1h-1zM506 403h1v1h-1zM510 403h1v1h-1zM514 403h1v1h-1zM518 403h1v1h-1zM522 403h1v1h-1zM526 403h1v1h-1zM530 403h1v1h-1zM534 403h1v1h-1zM538 403h1v1h-1zM542 403h1v1h-1zM546 403h1v1h-1zM550 403h1v1h-1zM554 403h1v1h-1zM558 403h1v1h-1zM562 403h1v1h-1zM566 403h1v1h-1zM570 403h1v1h-1zM574 403h1v1h-1zM578 403h1v1h-1zM582 403h1v1h-1zM586 403h1v1h-1zM590 403h1v1h-1zM594 403h1v1h-1zM598 403h1v1h-1zM602 403h1v1h-1zM2 438h1v1h-1zM6 438h1v1h-1zM10 438h1v1h-1zM14 438h1v1h-1zM18 438h1v1h-1zM22 438h1v1h-1zM26 438h1v1h-1zM30 438h1v1h-1zM34 438h1v1h-1zM38 438h1v1h-1zM42 438h1v1h-1zM46 438h1v1h-1zM50 438h1v1h-1zM54 438h1v1h-1zM58 438h1v1h-1zM62 438h1v1h-1zM66 438h1v1h-1zM70 438h1v1h-1zM74 438h1v1h-1zM78 438h1v1h-1zM82 438h1v1h-1zM86 438h1v1h-1zM90 438h1v1h-1zM94 438h1v1h-1zM98 438h1v1h-1zM102 438h1v1h-1zM106 438h1v1h-1zM110 438h1v1h-1zM114 438h1v1h-1zM118 438h1v1h-1zM122 438h1v1h-1zM126 438h1v1h-1zM130 438h1v1h-1zM134 438h1v1h-1zM138 438h1v1h-1zM142 438h1v1h-1zM146 438h1v1h-1zM150 438h1v1h-1zM154 438h1v1h-1zM158 438h1v1h-1zM162 438h1v1h-1zM166 438h1v1h-1zM170 438h1v1h-1zM174 438h1v1h-1zM178 438h1v1h-1zM182 438h1v1h-1zM186 438h1v1h-1zM190 438h1v1h-1zM194 438h1v1h-1zM198 438h1v1h-1zM202 438h1v1h-1zM206 438h1v1h-1zM210 438h1v1h-1zM214 438h1v1h-1zM218 438h1v1h-1zM222 438h1v1h-1zM226 438h1v1h-1zM230 438h1v1h-1zM234 438h1v1h-1zM238 438h1v1h-1zM242 438h1v1h-1zM246 438h1v1h-1zM250 438h1v1h-1zM254 438h1v1h-1zM258 438h1v1h-1zM262 438h1v1h-1zM266 438h1v1h-1zM270 438h1v1h-1zM274 438h1v1h-1zM278 438h1v1h-1zM282 438h1v1h-1zM286 438h1v1h-1zM290 438h1v1h-1zM294 438h1v1h-1zM298 438h1v1h-1zM302 438h1v1h-1zM306 438h1v1h-1zM310 438h1v1h-1zM314 438h1v1h-1zM318 438h1v1h-1zM322 438h1v1h-1zM326 438h1v1h-1zM330 438h1v1h-1zM334 438h1v1h-1zM338 438h1v1h-1zM342 438h1v1h-1zM346 438h1v1h-1zM350 438h1v1h-1zM354 438h1v1h-1zM358 438h1v1h-1zM362 438h1v1h-1zM366 438h1v1h-1zM370 438h1v1h-1zM374 438h1v1h-1zM378 438h1v1h-1zM382 438h1v1h-1zM386 438h1v1h-1zM390 438h1v1h-1zM394 438h1v1h-1zM398 438h1v1h-1zM402 438h1v1h-1zM406 438h1v1h-1zM410 438h1v1h-1zM414 438h1v1h-1zM418 438h1v1h-1zM422 438h1v1h-1zM426 438h1v1h-1zM430 438h1v1h-1zM434 438h1v1h-1zM438 438h1v1h-1zM442 438h1v1h-1zM446 438h1v1h-1zM450 438h1v1h-1zM454 438h1v1h-1zM458 438h1v1h-1zM462 438h1v1h-1zM466 438h1v1h-1zM470 438h1v1h-1zM474 438h1v1h-1zM478 438h1v1h-1zM482 438h1v1h-1zM486 438h1v1h-1zM490 438h1v1h-1zM494 438h1v1h-1zM498 438h1v1h-1zM502 438h1v1h-1zM506 438h1v1h-1zM510 438h1v1h-1zM514 438h1v1h-1zM518 438h1v1h-1zM522 438h1v1h-1zM526 438h1v1h-1zM530 438h1v1h-1zM534 438h1v1h-1zM538 438h1v1h-1zM542 438h1v1h-1zM546 438h1v1h-1zM550 438h1v1h-1zM554 438h1v1h-1zM558 438h1v1h-1zM562 438h1v1h-1zM566 438h1v1h-1zM570 438h1v1h-1zM574 438h1v1h-1zM578 438h1v1h-1zM582 438h1v1h-1zM586 438h1v1h-1zM590 438h1v1h-1zM594 438h1v1h-1zM598 438h1v1h-1zM602 438h1v1h-1zM2 473h1v1h-1zM6 473h1v1h-1zM10 473h1v1h-1zM14 473h1v1h-1zM18 473h1v1h-1zM22 473h1v1h-1zM26 473h1v1h-1zM30 473h1v1h-1zM34 473h1v1h-1zM38 473h1v1h-1zM42 473h1v1h-1zM46 473h1v1h-1zM50 473h1v1h-1zM54 473h1v1h-1zM58 473h1v1h-1zM62 473h1v1h-1zM66 473h1v1h-1zM70 473h1v1h-1zM74 473h1v1h-1zM78 473h1v1h-1zM82 473h1v1h-1zM86 473h1v1h-1zM90 473h1v1h-1zM94 473h1v1h-1zM98 473h1v1h-1zM102 473h1v1h-1zM106 473h1v1h-1zM110 473h1v1h-1zM114 473h1v1h-1zM118 473h1v1h-1zM122 473h1v1h-1zM126 473h1v1h-1zM130 473h1v1h-1zM134 473h1v1h-1zM138 473h1v1h-1zM142 473h1v1h-1zM146 473h1v1h-1zM150 473h1v1h-1zM154 473h1v1h-1zM158 473h1v1h-1zM162 473h1v1h-1zM166 473h1v1h-1zM170 473h1v1h-1zM174 473h1v1h-1zM178 473h1v1h-1zM182 473h1v1h-1zM186 473h1v1h-1zM190 473h1v1h-1zM194 473h1v1h-1zM198 473h1v1h-1zM202 473h1v1h-1zM206 473h1v1h-1zM210 473h1v1h-1zM214 473h1v1h-1zM218 473h1v1h-1zM222 473h1v1h-1zM226 473h1v1h-1zM230 473h1v1h-1zM234 473h1v1h-1zM238 473h1v1h-1zM242 473h1v1h-1zM246 473h1v1h-1zM250 473h1v1h-1zM254 473h1v1h-1zM258 473h1v1h-1zM262 473h1v1h-1zM266 473h1v1h-1zM270 473h1v1h-1zM274 473h1v1h-1zM278 473h1v1h-1zM282 473h1v1h-1zM286 473h1v1h-1zM290 473h1v1h-1zM294 473h1v1h-1zM298 473h1v1h-1zM302 473h1v1h-1zM306 473h1v1h-1zM310 473h1v1h-1zM314 473h1v1h-1zM318 473h1v1h-1zM322 473h1v1h-1zM326 473h1v1h-1zM330 473h1v1h-1zM334 473h1v1h-1zM338 473h1v1h-1zM342 473h1v1h-1zM346 473h1v1h-1zM350 473h1v1h-1zM354 473h1v1h-1zM358 473h1v1h-1zM362 473h1v1h-1zM366 473h1v1h-1zM370 473h1v1h-1zM374 473h1v1h-1zM378 473h1v1h-1zM382 473h1v1h-1zM386 473h1v1h-1zM390 473h1v1h-1zM394 473h1v1h-1zM398 473h1v1h-1zM402 473h1v1h-1zM406 473h1v1h-1zM410 473h1v1h-1zM414 473h1v1h-1zM418 473h1v1h-1zM422 473h1v1h-1zM426 473h1v1h-1zM430 473h1v1h-1zM434 473h1v1h-1zM438 473h1v1h-1zM442 473h1v1h-1zM446 473h1v1h-1zM450 473h1v1h-1zM454 473h1v1h-1zM458 473h1v1h-1zM462 473h1v1h-1zM466 473h1v1h-1zM470 473h1v1h-1zM474 473h1v1h-1zM478 473h1v1h-1zM482 473h1v1h-1zM486 473h1v1h-1zM490 473h1v1h-1zM494 473h1v1h-1zM498 473h1v1h-1zM502 473h1v1h-1zM506 473h1v1h-1zM510 473h1v1h-1zM514 473h1v1h-1zM518 473h1v1h-1zM522 473h1v1h-1zM526 473h1v1h-1zM530 473h1v1h-1zM534 473h1v1h-1zM538 473h1v1h-1zM542 473h1v1h-1zM546 473h1v1h-1zM550 473h1v1h-1zM554 473h1v1h-1zM558 473h1v1h-1zM562 473h1v1h-1zM566 473h1v1h-1zM570 473h1v1h-1zM574 473h1v1h-1zM578 473h1v1h-1zM582 473h1v1h-1zM586 473h1v1h-1zM590 473h1v1h-1zM594 473h1v1h-1zM598 473h1v1h-1zM602 473h1v1h-1zM2 508h1v1h-1zM6 508h1v1h-1zM10 508h1v1h-1zM14 508h1v1h-1zM18 508h1v1h-1zM22 508h1v1h-1zM26 508h1v1h-1zM30 508h1v1h-1zM34 508h1v1h-1zM38 508h1v1h-1zM42 508h1v1h-1zM46 508h1v1h-1zM50 508h1v1h-1zM54 508h1v1h-1zM58 508h1v1h-1zM62 508h1v1h-1zM66 508h1v1h-1zM70 508h1v1h-1zM74 508h1v1h-1zM78 508h1v1h-1zM82 508h1v1h-1zM86 508h1v1h-1zM90 508h1v1h-1zM94 508h1v1h-1zM98 508h1v1h-1zM102 508h1v1h-1zM106 508h1v1h-1zM110 508h1v1h-1zM114 508h1v1h-1zM118 508h1v1h-1zM122 508h1v1h-1zM126 508h1v1h-1zM130 508h1v1h-1zM134 508h1v1h-1zM138 508h1v1h-1zM142 508h1v1h-1zM146 508h1v1h-1zM150 508h1v1h-1zM154 508h1v1h-1zM158 508h1v1h-1zM162 508h1v1h-1zM166 508h1v1h-1zM170 508h1v1h-1zM174 508h1v1h-1zM178 508h1v1h-1zM182 508h1v1h-1zM186 508h1v1h-1zM190 508h1v1h-1zM194 508h1v1h-1zM198 508h1v1h-1zM202 508h1v1h-1zM206 508h1v1h-1zM210 508h1v1h-1zM214 508h1v1h-1zM218 508h1v1h-1zM222 508h1v1h-1zM226 508h1v1h-1zM230 508h1v1h-1zM234 508h1v1h-1zM238 508h1v1h-1zM242 508h1v1h-1zM246 508h1v1h-1zM250 508h1v1h-1zM254 508h1v1h-1zM258 508h1v1h-1zM262 508h1v1h-1zM266 508h1v1h-1zM270 508h1v1h-1zM274 508h1v1h-1zM278 508h1v1h-1zM282 508h1v1h-1zM286 508h1v1h-1zM290 508h1v1h-1zM294 508h1v1h-1zM298 508h1v1h-1zM302 508h1v1h-1zM306 508h1v1h-1zM310 508h1v1h-1zM314 508h1v1h-1zM318 508h1v1h-1zM322 508h1v1h-1zM326 508h1v1h-1zM330 508h1v1h-1zM334 508h1v1h-1zM338 508h1v1h-1zM342 508h1v1h-1zM346 508h1v1h-1zM350 508h1v1h-1zM354 508h1v1h-1zM358 508h1v1h-1zM362 508h1v1h-1zM366 508h1v1h-1zM370 508h1v1h-1zM374 508h1v1h-1zM378 508h1v1h-1zM382 508h1v1h-1zM386 508h1v1h-1zM390 508h1v1h-1zM394 508h1v1h-1zM398 508h1v1h-1zM402 508h1v1h-1zM406 508h1v1h-1zM410 508h1v1h-1zM414 508h1v1h-1zM418 508h1v1h-1zM422 508h1v1h-1zM426 508h1v1h-1zM430 508h1v1h-1zM434 508h1v1h-1zM438 508h1v1h-1zM442 508h1v1h-1zM446 508h1v1h-1zM450 508h1v1h-1zM454 508h1v1h-1zM458 508h1v1h-1zM462 508h1v1h-1zM466 508h1v1h-1zM470 508h1v1h-1zM474 508h1v1h-1zM478 508h1v1h-1zM482 508h1v1h-1zM486 508h1v1h-1zM490 508h1v1h-1zM494 508h1v1h-1zM498 508h1v1h-1zM502 508h1v1h-1zM506 508h1v1h-1zM510 508h1v1h-1zM514 508h1v1h-1zM518 508h1v1h-1zM522 508h1v1h-1zM526 508h1v1h-1zM530 508h1v1h-1zM534 508h1v1h-1zM538 508h1v1h-1zM542 508h1v1h-1zM546 508h1v1h-1zM550 508h1v1h-1zM554 508h1v1h-1zM558 508h1v1h-1zM562 508h1v1h-1zM566 508h1v1h-1zM570 508h1v1h-1zM574 508h1v1h-1zM578 508h1v1h-1zM582 508h1v1h-1zM586 508h1v1h-1zM590 508h1v1h-1zM594 508h1v1h-1zM598 508h1v1h-1zM602 508h1v1h-1z"/><rect x="0" y="366" width="605" height="1" fill="#b00000"/><rect x="0" y="386" width="605" height="1" fill="#a068a0"/><rect x="15.5" y="68.5" width="4" height="14" fill="#000" stroke="#ff3232"/><rect x="17" y="83" width="1" height="4" fill="#ff3232"/><rect x="23.5" y="22.5" width="4" height="51" fill="#000" stroke="#ff3232"/><rect x="25" y="6" width="1" height="16" fill="#ff3232"/><rect x="25" y="74" width="1" height="2" fill="#ff3232"/><rect x="39.5" y="47.5" width="4" height="6" fill="#000" stroke="#ff3232"/><rect x="41" y="35" width="1" height="12" fill="#ff3232"/><rect x="71.5" y="76.5" width="4" height="5" fill="#000" stroke="#ff3232"/><rect x="73" y="82" width="1" height="3" fill="#ff3232"/><rect x="79.5" y="73.5" width="4" height="3" fill="#000" stroke="#ff3232"/><rect x="81" y="65" width="1" height="8" fill="#ff3232"/><rect x="81" y="77" width="1" height="2" fill="#ff3232"/><rect x="94.5" y="78.5" width="4" height="5" fill="#000" stroke="#ff3232"/><rect x="96" y="66" width="1" height="12" fill="#ff3232"/><rect x="96" y="84" width="1" height="7" fill="#ff3232"/><rect x="102.5" y="68.5" width="4" height="11" fill="#000" stroke="#ff3232"/><rect x="104" y="63" width="1" height="5" fill="#ff3232"/><rect x="104" y="80" width="1" height="1" fill="#ff3232"/><rect x="118.5" y="86.5" width="4" height="5" fill="#000" stroke="#ff3232"/><rect x="120" y="82" width="1" height="4" fill="#ff3232"/><rect x="126.5" y="107.5" width="4" height="3" fill="#000" stroke="#ff3232"/><rect x="128" y="99" width="1" height="8" fill="#ff3232"/><rect x="128" y="111" width="1" height="5" fill="#ff3232"/><rect x="134.5" y="108.5" width="4" height="4" fill="#000" stroke="#ff3232"/><rect x="136" y="98" width="1" height="10" fill="#ff3232"/><rect x="182.5" y="238.5" width="4" height="2" fill="#000" stroke="#ff3232"/><rect x="184" y="233" width="1" height="5" fill="#ff3232"/><rect x="184" y="241" width="1" height="8" fill="#ff3232"/><rect x="198.5" y="264.5" width="4" height="10" fill="#000" stroke="#ff3232"/><rect x="200" y="251" width="1" height="13" fill="#ff3232"/><rect x="200" y="275" width="1" height="1" fill="#ff3232"/><rect x="213.5" y="267.5" width="4" height="4" fill="#000" stroke="#ff3232"/><rect x="215" y="259" width="1" height="8" fill="#ff3232"/><rect x="215" y="272" width="1" height="2" fill="#ff3232"/><rect x="237.5" y="302.5" width="4" height="1" fill="#000" stroke="#ff3232"/><rect x="239" y="289" width="1" height="13" fill="#ff3232"/><rect x="239" y="304" width="1" height="3" fill="#ff3232"/><rect x="261.5" y="314.5" width="4" height="4" fill="#000" stroke="#ff3232"/><rect x="263" y="304" width="1" height="10" fill="#ff3232"/><rect x="269.5" y="286.5" width="4" height="27" fill="#000" stroke="#ff3232"/><rect x="271" y="314" width="1" height="8" fill="#ff3232"/><rect x="277.5" y="228.5" width="4" height="67" fill="#000" stroke="#ff3232"/><rect x="301.5" y="232.5" width="4" height="13" fill="#000" stroke="#ff3232"/><rect x="303" y="219" width="1" height="13" fill="#ff3232"/><rect x="303" y="246" width="1" height="3" fill="#ff3232"/><rect x="316.5" y="250.5" width="4" height="5" fill="#000" stroke="#ff3232"/><rect x="318" y="233" width="1" height="17" fill="#ff3232"/><rect x="318" y="256" width="1" height="4" fill="#ff3232"/><rect x="324.5" y="228.5" width="4" height="14" fill="#000" stroke="#ff3232"/><rect x="326" y="222" width="1" height="6" fill="#ff3232"/><rect x="326" y="243" width="1" height="6" fill="#ff3232"/><rect x="340.5" y="237.5" width="4" height="3" fill="#000" stroke="#ff3232"/><rect x="342" y="229" width="1" height="8" fill="#ff3232"/><rect x="342" y="241" width="1" height="2" fill="#ff3232"/><rect x="348.5" y="214.5" width="4" height="28" fill="#000" stroke="#ff3232"/><rect x="350" y="194" width="1" height="20" fill="#ff3232"/><rect x="350" y="243" width="1" height="1" fill="#ff3232"/><rect x="356.5" y="176.5" width="4" height="40" fill="#000" stroke="#ff3232"/><rect x="358" y="163" width="1" height="13" fill="#ff3232"/><rect x="364.5" y="107.5" width="4" height="56" fill="#000" stroke="#ff3232"/><rect x="366" y="164" width="1" height="29" fill="#ff3232"/><rect x="372.5" y="91.5" width="4" height="16" fill="#000" stroke="#ff3232"/><rect x="374" y="70" width="1" height="21" fill="#ff3232"/><rect x="374" y="108" width="1" height="16" fill="#ff3232"/><rect x="380.5" y="91.5" width="4" height="16" fill="#000" stroke="#ff3232"/><rect x="382" y="80" width="1" height="11" fill="#ff3232"/><rect x="382" y="108" width="1" height="5" fill="#ff3232"/><rect x="388.5" y="73.5" width="4" height="13" fill="#000" stroke="#ff3232"/><rect x="390" y="30" width="1" height="43" fill="#ff3232"/><rect x="390" y="87" width="1" height="10" fill="#ff3232"/><rect x="396.5" y="59.5" width="4" height="28" fill="#000" stroke="#ff3232"/><rect x="398" y="88" width="1" height="10" fill="#ff3232"/><rect x="412.5" y="118.5" width="4" height="4" fill="#000" stroke="#ff3232"/><rect x="414" y="117" width="1" height="1" fill="#ff3232"/><rect x="414" y="123" width="1" height="11" fill="#ff3232"/><rect x="428.5" y="142.5" width="4" height="5" fill="#000" stroke="#ff3232"/><rect x="430" y="121" width="1" height="21" fill="#ff3232"/><rect x="430" y="148" width="1" height="1" fill="#ff3232"/><rect x="459.5" y="161.5" width="4" height="23" fill="#000" stroke="#ff3232"/><rect x="461" y="152" width="1" height="9" fill="#ff3232"/><rect x="461" y="185" width="1" height="9" fill="#ff3232"/><rect x="483.5" y="177.5" width="4" height="12" fill="#000" stroke="#ff3232"/><rect x="485" y="169" width="1" height="8" fill="#ff3232"/><rect x="485" y="190" width="1" height="1" fill="#ff3232"/><rect x="515.5" y="196.5" width="4" height="23" fill="#000" stroke="#ff3232"/><rect x="517" y="182" width="1" height="14" fill="#ff3232"/><rect x="517" y="220" width="1" height="1" fill="#ff3232"/><rect x="570.5" y="266.5" width="4" height="10" fill="#000" stroke="#ff3232"/><rect x="572" y="254" width="1" height="12" fill="#ff3232"/><rect x="572" y="277" width="1" height="2" fill="#ff3232"/><rect x="578.5" y="259.5" width="4" height="12" fill="#000" stroke="#ff3232"/><rect x="580" y="272" width="1" height="4" fill="#ff3232"/><rect x="602.5" y="251.5" width="4" height="33" fill="#000" stroke="#ff3232"/><rect x="604" y="249" width="1" height="2" fill="#ff3232"/><rect x="1" y="75" width="1" height="14" fill="#54ffff"/><rect x="-1" y="80" width="5" height="9" fill="#54ffff"/><rect x="9" y="86" width="1" height="13" fill="#54ffff"/><rect x="7" y="89" width="5" height="2" fill="#54ffff"/><rect x="33" y="33" width="1" height="18" fill="#54ffff"/><rect x="31" y="37" width="5" height="12" fill="#54ffff"/><rect x="49" y="47" width="1" height="26" fill="#54ffff"/><rect x="47" y="54" width="5" height="13" fill="#54ffff"/><rect x="57" y="68" width="1" height="12" fill="#54ffff"/><rect x="55" y="68" width="5" height="2" fill="#54ffff"/><rect x="65" y="70" width="1" height="10" fill="#54ffff"/><rect x="63" y="74" width="5" height="5" fill="#54ffff"/><rect x="88" y="75" width="1" height="17" fill="#54ffff"/><rect x="86" y="76" width="5" height="9" fill="#54ffff"/><rect x="112" y="70" width="1" height="20" fill="#54ffff"/><rect x="110" y="71" width="5" height="18" fill="#54ffff"/><rect x="144" y="114" width="1" height="39" fill="#54ffff"/><rect x="142" y="115" width="5" height="34" fill="#54ffff"/><rect x="152" y="155" width="1" height="20" fill="#54ffff"/><rect x="150" y="157" width="5" height="18" fill="#54ffff"/><rect x="160" y="183" width="1" height="11" fill="#54ffff"/><rect x="158" y="187" width="5" height="4" fill="#54ffff"/><rect x="168" y="186" width="1" height="12" fill="#54ffff"/><rect x="166" y="191" width="5" height="1" fill="#54ffff"/><rect x="176" y="193" width="1" height="42" fill="#54ffff"/><rect x="174" y="193" width="5" height="34" fill="#54ffff"/><rect x="192" y="239" width="1" height="29" fill="#54ffff"/><rect x="190" y="245" width="5" height="22" fill="#54ffff"/><rect x="207" y="253" width="1" height="30" fill="#54ffff"/><rect x="205" y="268" width="5" height="2" fill="#54ffff"/><rect x="223" y="272" width="1" height="14" fill="#54ffff"/><rect x="221" y="274" width="5" height="12" fill="#54ffff"/><rect x="231" y="288" width="1" height="15" fill="#54ffff"/><rect x="229" y="294" width="5" height="7" fill="#54ffff"/><rect x="247" y="299" width="1" height="15" fill="#54ffff"/><rect x="245" y="301" width="5" height="11" fill="#54ffff"/><rect x="255" y="308" width="1" height="11" fill="#54ffff"/><rect x="253" y="310" width="5" height="4" fill="#54ffff"/><rect x="287" y="209" width="1" height="37" fill="#54ffff"/><rect x="285" y="216" width="5" height="25" fill="#54ffff"/><rect x="295" y="201" width="1" height="37" fill="#54ffff"/><rect x="293" y="222" width="5" height="15" fill="#54ffff"/><rect x="311" y="234" width="1" height="25" fill="#54ffff"/><rect x="309" y="238" width="5" height="21" fill="#54ffff"/><rect x="334" y="234" width="1" height="14" fill="#54ffff"/><rect x="332" y="239" width="5" height="1" fill="#54ffff"/><rect x="406" y="76" width="1" height="36" fill="#54ffff"/><rect x="404" y="82" width="5" height="26" fill="#54ffff"/><rect x="422" y="108" width="1" height="43" fill="#54ffff"/><rect x="420" y="110" width="5" height="37" fill="#54ffff"/><rect x="437" y="144" width="1" height="32" fill="#54ffff"/><rect x="435" y="150" width="5" height="18" fill="#54ffff"/><rect x="445" y="154" width="1" height="24" fill="#54ffff"/><rect x="443" y="162" width="5" height="8" fill="#54ffff"/><rect x="453" y="169" width="1" height="21" fill="#54ffff"/><rect x="451" y="176" width="5" height="7" fill="#54ffff"/><rect x="469" y="164" width="1" height="18" fill="#54ffff"/><rect x="467" y="167" width="5" height="15" fill="#54ffff"/><rect x="477" y="166" width="1" height="31" fill="#54ffff"/><rect x="475" y="174" width="5" height="15" fill="#54ffff"/><rect x="493" y="173" width="1" height="26" fill="#54ffff"/><rect x="491" y="184" width="5" height="6" fill="#54ffff"/><rect x="501" y="189" width="1" height="15" fill="#54ffff"/><rect x="499" y="194" width="5" height="6" fill="#54ffff"/><rect x="509" y="195" width="1" height="23" fill="#54ffff"/><rect x="507" y="195" width="5" height="21" fill="#54ffff"/><rect x="525" y="200" width="1" height="23" fill="#54ffff"/><rect x="523" y="206" width="5" height="15" fill="#54ffff"/><rect x="533" y="215" width="1" height="18" fill="#54ffff"/><rect x="531" y="221" width="5" height="10" fill="#54ffff"/><rect x="541" y="227" width="1" height="12" fill="#54ffff"/><rect x="539" y="231" width="5" height="5" fill="#54ffff"/><rect x="548" y="237" width="1" height="22" fill="#54ffff"/><rect x="546" y="237" width="5" height="21" fill="#54ffff"/><rect x="556" y="247" width="1" height="15" fill="#54ffff"/><rect x="554" y="256" width="5" height="3" fill="#54ffff"/><rect x="564" y="264" width="1" height="15" fill="#54ffff"/><rect x="562" y="265" width="5" height="11" fill="#54ffff"/><rect x="588" y="250" width="1" height="26" fill="#54ffff"/><rect x="586" y="259" width="5" height="17" fill="#54ffff"/><rect x="596" y="265" width="1" height="18" fill="#54ffff"/><rect x="594" y="280" width="5" height="1" fill="#54ffff"/><polyline points="-0.5,42.3 1.5,43.5 9.5,52.5 17.5,56.8 25.5,56.3 33.5,58.8 41.5,60.5 49.5,65.0 57.5,66.0 65.5,66.5 73.5,66.3 81.5,64.7 88.5,64.1 96.5,65.1 104.5,69.7 112.5,73.7 120.5,77.6 128.5,81.6 136.5,85.4 144.5,92.4 152.5,102.3 160.5,114.1 168.5,124.8 176.5,139.7 184.5,156.7 192.5,174.5 200.5,192.3 207.5,208.6 215.5,224.5 223.5,238.2 231.5,250.8 239.5,261.9 247.5,273.9 255.5,282.6 263.5,290.2 271.5,292.1 279.5,288.5 287.5,285.6 295.5,282.6 303.5,277.2 311.5,273.0 318.5,267.8 326.5,259.4 334.5,252.0 342.5,244.3 350.5,237.1 358.5,231.9 366.5,218.5 374.5,203.9 382.5,189.8 390.5,171.2 398.5,152.1 406.5,140.1 414.5,127.9 422.5,118.9 430.5,111.7 437.5,110.9 445.5,117.2 453.5,126.4 461.5,133.4 469.5,144.3 477.5,157.3 485.5,164.2 493.5,171.4 501.5,176.7 509.5,184.1 517.5,186.9 525.5,192.0 533.5,196.8 541.5,204.3 548.5,211.9 556.5,218.9 564.5,228.8 572.5,236.4 580.5,242.3 588.5,248.3 596.5,256.8 604.5,259.8" fill="none" stroke="#ffff00" stroke-width="1"/><polyline points="-0.5,44.8 1.5,45.0 9.5,46.0 17.5,46.0 25.5,42.7 33.5,41.3 41.5,40.3 49.5,43.5 57.5,44.5 65.5,46.3 73.5,50.0 81.5,54.0 88.5,57.0 96.5,60.5 104.5,64.0 112.5,67.5 120.5,70.6 128.5,73.8 136.5,77.0 144.5,80.3 152.5,84.3 160.5,89.4 168.5,94.5 176.5,102.4 184.5,113.2 192.5,124.1 200.5,134.9 207.5,145.1 215.5,154.9 223.5,165.3 231.5,176.6 239.5,188.0 247.5,199.3 255.5,211.2 263.5,223.4 271.5,233.3 279.5,240.4 287.5,247.1 295.5,253.6 303.5,257.7 311.5,261.9 318.5,264.9 326.5,266.6 334.5,267.3 342.5,267.2 350.5,264.6 358.5,260.2 366.5,252.1 374.5,243.2 382.5,233.5 390.5,222.1 398.5,209.9 406.5,199.8 414.5,189.9 422.5,181.6 430.5,174.4 437.5,171.4 445.5,167.8 453.5,165.2 461.5,161.6 469.5,157.8 477.5,154.7 485.5,152.2 493.5,149.7 501.5,147.8 509.5,147.9 517.5,148.9 525.5,154.6 533.5,161.6 541.5,168.8 548.5,178.1 556.5,188.1 564.5,196.5 572.5,203.9 580.5,209.5 588.5,216.2 596.5,221.8 604.5,225.9" fill="none" stroke="#ff00ff" stroke-width="1"/><polyline points="-0.5,49.0 1.5,49.0 9.5,49.0 17.5,49.0 25.5,46.5 33.5,44.5 41.5,43.3 49.5,45.3 57.5,48.0 65.5,49.5 73.5,51.0 81.5,51.3 88.5,51.7 96.5,52.3 104.5,51.5 112.5,51.7 120.5,53.3 128.5,55.5 136.5,58.3 144.5,62.0 152.5,67.5 160.5,74.5 168.5,80.0 176.5,87.8 184.5,94.5 192.5,102.0 200.5,110.0 207.5,118.5 215.5,126.5 223.5,133.5 231.5,139.8 239.5,146.9 247.5,154.3 255.5,162.5 263.5,172.2 271.5,180.1 279.5,186.1 287.5,191.9 295.5,197.5 303.5,202.6 311.5,208.7 318.5,214.6 326.5,219.4 334.5,224.8 342.5,230.4 350.5,234.6 358.5,237.6 366.5,237.6 374.5,237.0 382.5,235.1 390.5,231.7 398.5,227.3 406.5,224.5 414.5,220.8 422.5,217.8 430.5,213.6 437.5,210.4 445.5,207.1 453.5,204.3 461.5,200.1 469.5,196.2 477.5,192.4 485.5,187.9 493.5,183.8 501.5,180.0 509.5,177.6 517.5,176.6 525.5,175.9 533.5,175.7 541.5,175.8 548.5,175.8 556.5,176.1 564.5,177.7 572.5,178.6 580.5,179.3 588.5,181.4 596.5,184.9 604.5,189.7" fill="none" stroke="#c0c0c0" stroke-width="1"/><polyline points="-0.5,25.3 1.5,25.6 9.5,27.0 17.5,28.9 25.5,30.7 33.5,32.3 41.5,33.8 49.5,35.4 57.5,37.3 65.5,38.9 73.5,40.1 81.5,41.5 88.5,42.8 96.5,44.1 104.5,45.7 112.5,47.4 120.5,48.8 128.5,50.9 136.5,53.9 144.5,56.0 152.5,58.3 160.5,61.7 168.5,65.6 176.5,68.8 184.5,72.0 192.5,75.2 200.5,78.5 207.5,82.2 215.5,86.1 223.5,89.9 231.5,93.7 239.5,97.7 247.5,101.7 255.5,106.0 263.5,109.8 271.5,112.7 279.5,115.6 287.5,118.4 295.5,121.7 303.5,125.2 311.5,128.9 318.5,132.2 326.5,135.5 334.5,137.8 342.5,140.5 350.5,143.1 358.5,145.1 366.5,146.7 374.5,147.7 382.5,148.7 390.5,149.7 398.5,150.7 406.5,152.2 414.5,153.9 422.5,155.6 430.5,157.8 437.5,159.8 445.5,161.8 453.5,163.6 461.5,164.5 469.5,168.0 477.5,169.7 485.5,171.1 493.5,173.1 501.5,176.1 509.5,178.9 517.5,181.3 525.5,183.9 533.5,186.6 541.5,189.2 548.5,192.2 556.5,195.3 564.5,198.5 572.5,201.7 580.5,204.8 588.5,208.0 596.5,211.2 604.5,213.6" fill="none" stroke="#00ff00" stroke-width="1"/><polyline points="-0.5,65.1 1.5,66.3 9.5,79.5 17.5,79.5 25.5,71.7 33.5,64.3 41.5,55.9 49.5,51.1 57.5,51.5 65.5,62.9 73.5,68.3 81.5,73.5 88.5,77.1 96.5,78.7 104.5,76.5 112.5,79.1 120.5,81.7 128.5,86.1 136.5,92.1 144.5,108.3 152.5,125.5 160.5,146.5 168.5,163.5 176.5,187.3 184.5,205.1 192.5,223.5 200.5,238.1 207.5,253.7 215.5,261.7 223.5,271.3 231.5,278.1 239.5,285.7 247.5,294.1 255.5,303.5 263.5,309.1 271.5,306.1 279.5,291.3 287.5,277.1 295.5,261.7 303.5,245.3 311.5,239.9 318.5,244.3 326.5,241.7 334.5,242.3 342.5,243.3 350.5,234.3 358.5,219.5 366.5,195.3 374.5,165.5 382.5,136.3 390.5,108.1 398.5,84.7 406.5,84.9 414.5,90.3 422.5,101.5 430.5,115.3 437.5,137.1 445.5,149.5 453.5,162.5 461.5,165.3 469.5,173.3 477.5,177.5 485.5,178.9 493.5,180.3 501.5,188.1 509.5,194.9 517.5,196.3 525.5,205.1 533.5,213.3 541.5,220.5 548.5,228.9 556.5,241.5 564.5,252.5 572.5,259.5 580.5,264.1 588.5,267.7 596.5,272.1 604.5,267.1" fill="none" stroke="#ffffff" stroke-width="1"/><polyline points="0.0,497.2 9.3,502.1 17.9,502.1 18.0,502.1" fill="none" stroke="#00ff00" stroke-width="2"/><polyline points="18.0,502.1 19.8,501.6 25.8,499.2 41.0,499.2 42.3,500.6 47.0,500.6" fill="none" stroke="#ff0000" stroke-width="2"/><polyline points="47.0,500.6 49.6,501.6 56.9,502.9 64.8,504.8 73.4,507.0 78.0,507.2 83.0,508.4 88.0,509.8 94.0,511.0 100.0,512.0 106.0,513.0 114.0,515.1 123.0,517.8 131.0,520.4 134.0,521.3 138.0,523.0 143.5,524.4 150.0,527.0 156.0,529.4 161.5,531.0 166.5,532.4 172.0,533.9 180.0,535.3 186.0,537.0 188.5,538.0 191.5,539.0 200.0,539.0 200.6,540.0 215.0,540.0 215.6,541.0 219.0,541.0 219.6,542.0 223.0,542.0 223.6,543.0 231.3,543.0 231.9,544.0 237.0,544.0 238.5,545.0 255.3,545.0 256.3,546.0 264.3,546.0" fill="none" stroke="#00ff00" stroke-width="2"/><polyline points="264.3,546.0 268.0,545.0 272.0,543.6 275.0,541.8 278.0,539.8 282.0,537.9 286.0,536.4 290.0,533.9 294.5,531.9 298.0,529.4 306.9,525.2 319.1,520.2 331.4,515.8 342.5,512.9 348.6,509.7 358.5,502.3 368.3,488.8 380.6,473.6 390.2,461.1 393.6,455.5 398.2,449.1 404.5,444.5 413.6,439.1 422.7,438.2 431.8,436.5 436.5,437.0" fill="none" stroke="#ff0000" stroke-width="2"/><polyline points="436.5,437.0 445.5,437.0 446.5,438.0 454.0,438.0" fill="none" stroke="#00ff00" stroke-width="2"/><polyline points="454.0,438.0 461.0,438.0 462.0,439.0 469.0,439.0" fill="none" stroke="#ff0000" stroke-width="2"/><polyline points="469.0,439.0 470.0,440.0 473.5,440.0 475.0,441.5 482.5,442.0 488.0,443.0 491.8,444.0 497.6,446.2 505.2,449.0 514.7,451.3 524.2,455.7 533.5,460.0 541.3,463.8 550.8,470.3 560.3,477.9 569.8,482.9 580.5,487.7 588.9,491.8 598.4,496.5 605.0,498.0 605.0,498.0" fill="none" stroke="#00ff00" stroke-width="2"/><path d="M47 498h5v2h-3v2h-2z" fill="#ffffff"/><path d="M94 509h5v2h-3v2h-2z" fill="#ffffff"/><path d="M142 523h5v2h-3v2h-2z" fill="#ffffff"/><path d="M190 536h5v2h-3v2h-2z" fill="#ffffff"/><path d="M237 542h5v2h-3v2h-2z" fill="#ffffff"/><path d="M435 434h5v2h-3v2h-2z" fill="#ffffff"/><path d="M483 440h5v2h-3v2h-2z" fill="#ffffff"/><path d="M531 458h5v2h-3v2h-2z" fill="#ffffff"/><path d="M578 486h5v2h-3v2h-2z" fill="#ffffff"/><rect x="0" y="456" width="605" height="1" fill="#c0c0c0"/><rect x="0" y="525" width="605" height="2" fill="#00ff00"/><rect x="0" y="549" width="605" height="1" fill="#b00000"/><path d="M359 352h10l3 3v10h-13z" fill="#8b4513"/><path fill="#ffffff" d="M362 353h1v1h-1zM367 353h1v1h-1zM362 354h1v1h-1zM364 354h1v1h-1zM365 354h1v1h-1zM366 354h1v1h-1zM367 354h1v1h-1zM368 354h1v1h-1zM369 354h1v1h-1zM370 354h1v1h-1zM360 355h1v1h-1zM361 355h1v1h-1zM362 355h1v1h-1zM363 355h1v1h-1zM365 355h1v1h-1zM366 355h1v1h-1zM368 355h1v1h-1zM369 355h1v1h-1zM370 355h1v1h-1zM362 356h1v1h-1zM363 356h1v1h-1zM365 356h1v1h-1zM366 356h1v1h-1zM367 356h1v1h-1zM368 356h1v1h-1zM369 356h1v1h-1zM370 356h1v1h-1zM361 357h1v1h-1zM362 357h1v1h-1zM370 357h1v1h-1zM361 358h1v1h-1zM362 358h1v1h-1zM367 358h1v1h-1zM360 359h1v1h-1zM362 359h1v1h-1zM364 359h1v1h-1zM365 359h1v1h-1zM366 359h1v1h-1zM367 359h1v1h-1zM368 359h1v1h-1zM369 359h1v1h-1zM370 359h1v1h-1zM362 360h1v1h-1zM365 360h1v1h-1zM366 360h1v1h-1zM362 361h1v1h-1zM366 361h1v1h-1zM367 361h1v1h-1zM368 361h1v1h-1zM369 361h1v1h-1zM370 361h1v1h-1zM362 362h1v1h-1zM365 362h1v1h-1zM370 362h1v1h-1zM362 363h1v1h-1zM364 363h1v1h-1zM368 363h1v1h-1zM369 363h1v1h-1z"/></svg></body></html>
